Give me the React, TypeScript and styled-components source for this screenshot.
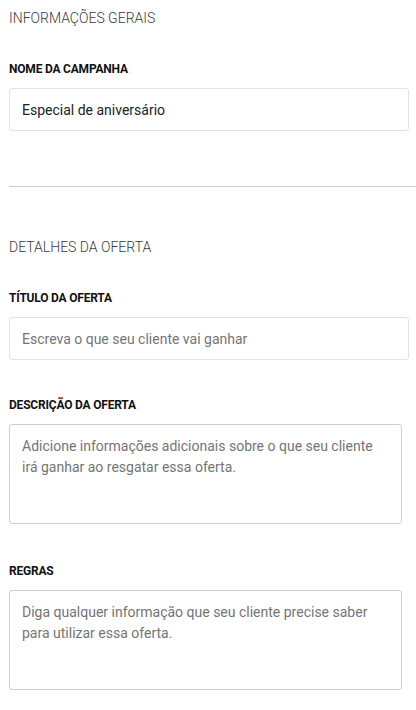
import React from "react";
import styled, { createGlobalStyle } from "styled-components";

const GlobalStyle = createGlobalStyle`
  html, body { margin: 0; padding: 0; background: #fff; }
  body { font-family: Roboto, "Liberation Sans", Arial, sans-serif; }
  * { box-sizing: border-box; }
`;

const Page = styled.div`
  width: 416px;
  padding: 10px 0 20px 9px;
  display: flex;
  flex-direction: column;
`;

const Section = styled.section`
  display: flex;
  flex-direction: column;
`;

const SectionTitle = styled.h2`
  margin: 0 0 36px 0;
  font-size: 14px;
  line-height: 16px;
  font-weight: 300;
  color: #3a3a3a;
  letter-spacing: 0;
`;

const Field = styled.div<{ $gapAfter?: number }>`
  display: flex;
  flex-direction: column;
  margin-bottom: ${(p) => p.$gapAfter ?? 0}px;
`;

const Label = styled.label`
  font-size: 12px;
  line-height: 14px;
  font-weight: 700;
  letter-spacing: -0.2px;
  color: #111;
  margin-bottom: 12px;
`;

const TextInput = styled.input`
  width: 400px;
  height: 43px;
  border: 1px solid #e3e3e3;
  border-radius: 3px;
  padding: 0 12px;
  font-family: Roboto, "Liberation Sans", Arial, sans-serif;
  font-size: 14px;
  color: #222;
  outline: none;
  background: #fff;
  &::placeholder { color: #757575; }
`;

const TextArea = styled.textarea`
  width: 393px;
  height: 100px;
  border: 1px solid #cfcfcf;
  border-radius: 3px;
  padding: 11px 12px;
  font-family: Roboto, "Liberation Sans", Arial, sans-serif;
  font-size: 14px;
  line-height: 21px;
  color: #222;
  resize: none;
  outline: none;
  background: #fff;
  &::placeholder { color: #757575; }
`;

const Divider = styled.hr`
  border: none;
  border-top: 1px solid #cccccc;
  margin: 55px 0 52px 0;
  width: 407px;
`;

export default function App() {
  return (
    <>
      <GlobalStyle />
      <Page>
        <Section>
          <SectionTitle>INFORMAÇÕES GERAIS</SectionTitle>
          <Field>
            <Label>NOME DA CAMPANHA</Label>
            <TextInput defaultValue="Especial de aniversário" />
          </Field>
        </Section>
        <Divider />
        <Section>
          <SectionTitle>DETALHES DA OFERTA</SectionTitle>
          <Field $gapAfter={38}>
            <Label>TÍTULO DA OFERTA</Label>
            <TextInput placeholder="Escreva o que seu cliente vai ganhar" />
          </Field>
          <Field $gapAfter={40}>
            <Label>DESCRIÇÃO DA OFERTA</Label>
            <TextArea placeholder="Adicione informações adicionais sobre o que seu cliente irá ganhar ao resgatar essa oferta." />
          </Field>
          <Field>
            <Label>REGRAS</Label>
            <TextArea placeholder="Diga qualquer informação que seu cliente precise saber para utilizar essa oferta." />
          </Field>
        </Section>
      </Page>
    </>
  );
}
